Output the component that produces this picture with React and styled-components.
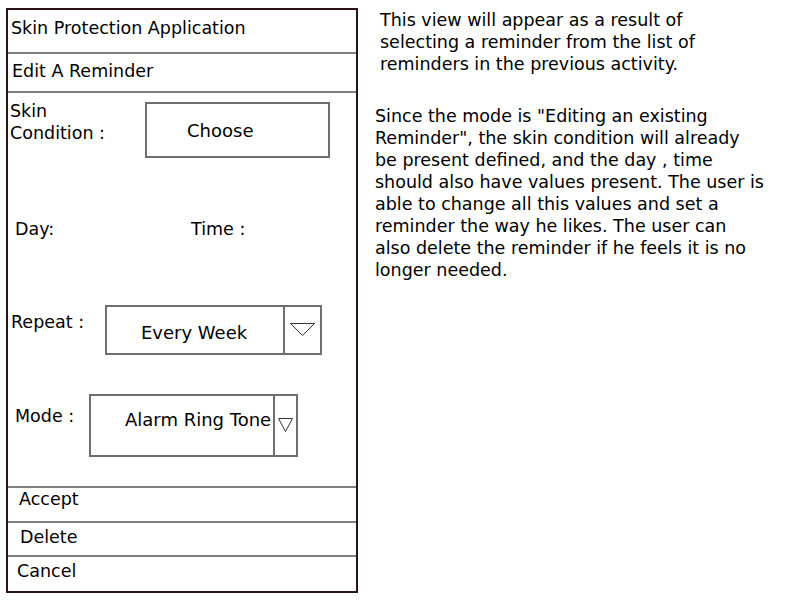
import React from 'react';
import styled, { createGlobalStyle } from 'styled-components';

const GlobalStyle = createGlobalStyle`
    body {
        margin: 0;
        background: #fff;
        font-family: "DejaVu Sans", "Liberation Sans", sans-serif;
        font-size: 17.5px;
        line-height: 22px;
        color: #000;
    }
`

const Page = styled.div`
    display: flex;
    align-items: flex-start;
    width: 800px;
    height: 600px;
`

const Phone = styled.div`
    box-sizing: border-box;
    margin: 8px 0 0 6px;
    width: 352px;
    height: 585px;
    border: 2px solid #2a1414;
    display: flex;
    flex-direction: column;
`

const Bar = styled.div`
    box-sizing: border-box;
    height: ${({ h }) => h}px;
    padding: ${({ pt }) => pt}px 0 0 ${({ pl }) => pl}px;
    border-bottom: ${({ last }) => (last ? 'none' : '2px solid #808080')};
    flex-shrink: 0;
`

const Form = styled.div`
    box-sizing: border-box;
    height: 395px;
    border-bottom: 2px solid #808080;
    display: flex;
    flex-direction: column;
`

const Row = styled.div`
    display: flex;
    align-items: flex-start;
    margin-top: ${({ mt }) => mt}px;
`

const Label = styled.div`
    box-sizing: border-box;
    width: ${({ w }) => w}px;
    padding-left: ${({ pl }) => pl}px;
    margin-top: ${({ mt = 0 }) => mt}px;
    flex-shrink: 0;
    white-space: nowrap;
`

const ChooseBox = styled.div`
    box-sizing: border-box;
    margin-top: 2px;
    width: 185px;
    height: 56px;
    border: 2px solid #6e6e6e;
    padding: 16px 0 0 40px;
    font-size: 18px;
`

const Select = styled.div`
    box-sizing: border-box;
    width: ${({ w }) => w}px;
    height: ${({ h }) => h}px;
    border: 2px solid #6e6e6e;
    display: grid;
    grid-template-columns: 1fr ${({ arrow }) => arrow}px;
`

const SelectValue = styled.div`
    padding: ${({ pt }) => pt}px 0 0 34px;
    white-space: nowrap;
    font-size: 18px;
`

const ArrowCell = styled.div`
    border-left: 2px solid #6e6e6e;
    display: flex;
    justify-content: center;
    padding-top: ${({ pt }) => pt}px;
`

const Notes = styled.div`
    display: flex;
    flex-direction: column;
`

const Para = styled.p`
    margin: ${({ mt }) => mt}px 0 0 ${({ ml }) => ml}px;
    white-space: nowrap;
`

const Arrow = ({ w, h }) => (
    <svg width={w} height={h} viewBox={`0 0 ${w} ${h}`}>
        <polygon points={`0.5,0.5 ${w - 0.5},0.5 ${w / 2},${h - 0.5}`} fill="none" stroke="#333" strokeWidth="1" />
    </svg>
)

const App = () => {
    return (
        <Page>
            <GlobalStyle />
            <Phone>
                <Bar h={44} pt={7} pl={3}>Skin Protection Application</Bar>
                <Bar h={39} pt={6} pl={4}>Edit A Reminder</Bar>
                <Form>
                    <Row mt={7}>
                        <Label w={137} pl={2}>Skin<br />Condition :</Label>
                        <ChooseBox>Choose</ChooseBox>
                    </Row>
                    <Row mt={60}>
                        <Label w={183} pl={7}>Day:</Label>
                        <Label w={100} pl={0}>Time :</Label>
                    </Row>
                    <Row mt={65}>
                        <Label w={97} pl={3} mt={6}>Repeat :</Label>
                        <Select w={217} h={50} arrow={37}>
                            <SelectValue pt={15}>Every Week</SelectValue>
                            <ArrowCell pt={16}><Arrow w={25} h={13} /></ArrowCell>
                        </Select>
                    </Row>
                    <Row mt={39}>
                        <Label w={81} pl={7} mt={11}>Mode :</Label>
                        <Select w={209} h={63} arrow={23}>
                            <SelectValue pt={13}>Alarm Ring Tone</SelectValue>
                            <ArrowCell pt={22}><Arrow w={15} h={14} /></ArrowCell>
                        </Select>
                    </Row>
                </Form>
                <Bar h={35} pt={0} pl={11}>Accept</Bar>
                <Bar h={34} pt={3} pl={12}>Delete</Bar>
                <Bar h={34} pt={3} pl={9} last>Cancel</Bar>
            </Phone>
            <Notes>
                <Para mt={9} ml={22}>
                    This view will appear as a result of<br />
                    selecting a reminder from the list of<br />
                    reminders in the previous activity.
                </Para>
                <Para mt={30} ml={17}>
                    Since the mode is "Editing an existing<br />
                    Reminder", the skin condition will already<br />
                    be present defined, and the day , time<br />
                    should also have values present. The user is<br />
                    able to change all this values and set a<br />
                    reminder the way he likes. The user can<br />
                    also delete the reminder if he feels it is no<br />
                    longer needed.
                </Para>
            </Notes>
        </Page>
    )
}

export default App;
